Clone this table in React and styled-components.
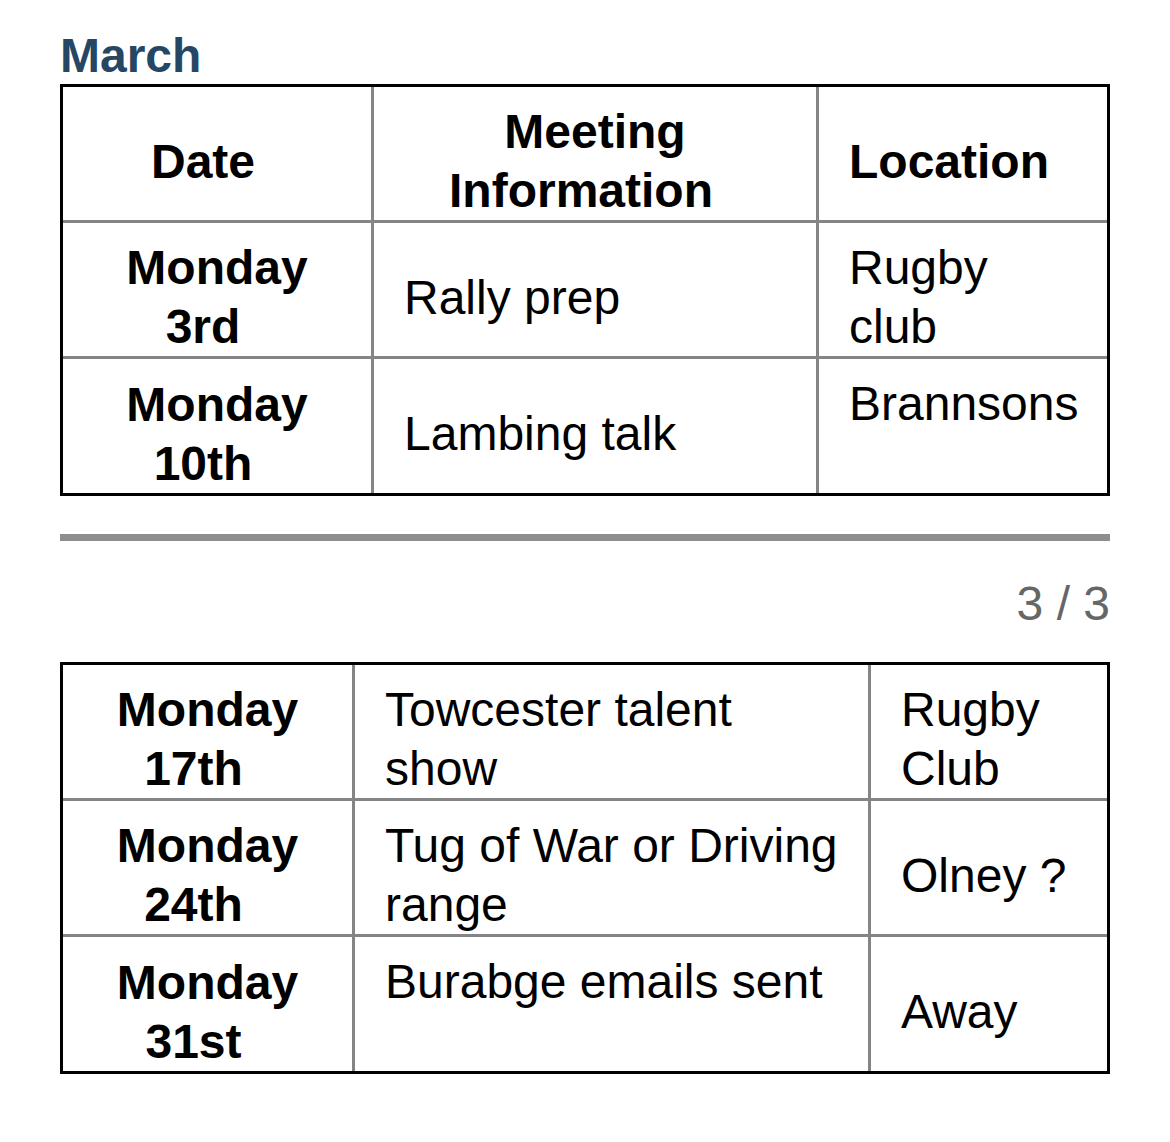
import React from "react";
import styled, { createGlobalStyle } from "styled-components";

const GlobalStyle = createGlobalStyle`
	body {
		margin: 0;
		background: #ffffff;
		font-family: "Liberation Sans", Arial, Helvetica, sans-serif;
		color: #000000;
	}
`;

const Page = styled.main`
	width: 1050px;
	padding: 29px 60px 40px;
	display: flex;
	flex-direction: column;
`;

const Month = styled.h2`
	margin: 0 0 1px;
	font-size: 48px;
	line-height: 54px;
	font-weight: 700;
	color: #264764;
`;

const Table = styled.table`
	width: 1050px;
	table-layout: fixed;
	border-collapse: separate;
	border-spacing: 0;
	border: 3px solid #000000;
	font-size: 48px;
	line-height: 59px;
`;

const Col = styled.col`
	width: ${(p) => p.$w}px;
`;

const Cell = styled.td`
	box-sizing: border-box;
	height: 136px;
	padding: 15px 24px 0 30px;
	vertical-align: ${(p) => (p.$top ? "top" : "middle")};
	text-align: left;
	font-weight: 400;
	border-right: 3px solid #858585;
	border-bottom: 3px solid #858585;

	&:last-child {
		border-right: none;
	}
	tr:last-child > & {
		border-bottom: none;
		height: 134px;
	}
`;

const CenterCell = styled(Cell)`
	padding: 15px 0 0;
	text-align: center;
	font-weight: 700;
`;

const Line = styled.span`
	display: block;
	padding-right: ${(p) => (p.$tail ? 28 : 0)}px;
`;

const Rule = styled.hr`
	margin: 38px 0 0;
	height: 7px;
	border: none;
	background: #8e8e8e;
`;

const Pager = styled.div`
	margin: 35px 0 31px;
	text-align: right;
	font-size: 48px;
	line-height: 55px;
	color: #666666;
`;

const firstWeeks = [
	{ day: "Monday", num: "3rd", info: "Rally prep", place: "Rugby club" },
	{ day: "Monday", num: "10th", info: "Lambing talk", place: "Brannsons", placeTop: true },
];

const lastWeeks = [
	{ day: "Monday", num: "17th", info: "Towcester talent show", place: "Rugby Club" },
	{ day: "Monday", num: "24th", info: "Tug of War or Driving range", place: "Olney ?" },
	{ day: "Monday", num: "31st", info: "Burabge emails sent", place: "Away", infoTop: true },
];

const DateCell = ({ day, num }) => (
	<CenterCell>
		<Line>{day}</Line>
		<Line $tail>{num}</Line>
	</CenterCell>
);

const WeekRow = ({ row }) => (
	<tr>
		<DateCell day={row.day} num={row.num} />
		<Cell $top={row.infoTop}>{row.info}</Cell>
		<Cell $top={row.placeTop}>{row.place}</Cell>
	</tr>
);

const App = () => {
	return (
		<Page>
			<GlobalStyle />
			<Month>March</Month>

			<Table>
				<colgroup>
					<Col $w={311} />
					<Col $w={445} />
					<Col $w={288} />
				</colgroup>
				<tbody>
					<tr>
						<CenterCell as="th">
							<Line $tail>Date</Line>
						</CenterCell>
						<CenterCell as="th">
							<Line>Meeting</Line>
							<Line $tail>Information</Line>
						</CenterCell>
						<CenterCell as="th">
							<Line $tail>Location</Line>
						</CenterCell>
					</tr>
					{firstWeeks.map((row) => (
						<WeekRow key={row.num} row={row} />
					))}
				</tbody>
			</Table>

			<Rule />
			<Pager>3 / 3</Pager>

			<Table>
				<colgroup>
					<Col $w={292} />
					<Col $w={516} />
					<Col $w={236} />
				</colgroup>
				<tbody>
					{lastWeeks.map((row) => (
						<WeekRow key={row.num} row={row} />
					))}
				</tbody>
			</Table>
		</Page>
	);
};

export default App;
